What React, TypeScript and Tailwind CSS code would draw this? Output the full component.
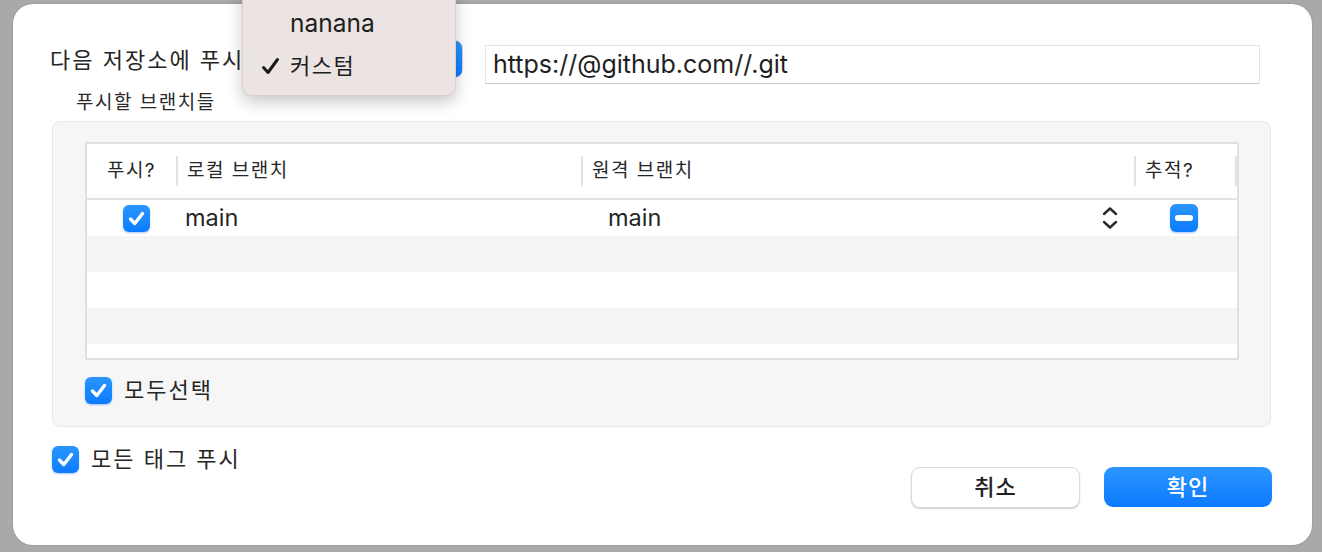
import React from 'react';

const font = "font-[Inter,'Noto_Sans_CJK_KR',sans-serif]";

const CheckBox: React.FC = () => (
  <div className="w-[27px] h-[27px] rounded-[6px] bg-gradient-to-b from-[#2a95ff] to-[#0a7bff] shadow-[0_1px_2px_rgba(0,90,255,0.35)] flex items-center justify-center shrink-0">
    <svg width="27" height="27" viewBox="0 0 27 27">
      <path d="M7.5 14 L11.8 18.5 L19.5 8.5" fill="none" stroke="white" strokeWidth="3.4" strokeLinecap="round" strokeLinejoin="round" />
    </svg>
  </div>
);

const MinusBox: React.FC = () => (
  <div className="w-[28px] h-[28px] rounded-[6px] bg-gradient-to-b from-[#2a95ff] to-[#0a7bff] shadow-[0_1px_2px_rgba(0,90,255,0.35)] flex items-center justify-center">
    <div className="w-[18px] h-[6px] rounded-full bg-white" />
  </div>
);

const UpDown: React.FC = () => (
  <svg width="16" height="24" viewBox="0 0 16 24">
    <path d="M2 8 L8 2.5 L14 8" fill="none" stroke="#2a2a2a" strokeWidth="2.4" strokeLinecap="round" strokeLinejoin="round" />
    <path d="M2 16 L8 21.5 L14 16" fill="none" stroke="#2a2a2a" strokeWidth="2.4" strokeLinecap="round" strokeLinejoin="round" />
  </svg>
);

const HeaderCell: React.FC<{ w: string; children?: React.ReactNode; center?: boolean }> = ({ w, children, center }) => (
  <div className={`${w} h-[30px] flex items-center ${center ? 'justify-center' : 'pl-[9px]'} border-r-2 border-[#e3e3e3]`}>
    {children}
  </div>
);

export default function App() {
  const emptyRows = [1, 2, 3, 4];

  return (
    <div className={`w-[1322px] h-[552px] bg-[#aaa9aa] pl-[13px] pt-[4px] overflow-hidden text-[#262626] ${font}`}>
      <div className="relative w-[1299px] h-[541px] bg-white rounded-[20px] pl-[37px] pt-[36px] shadow-[0_0_2px_rgba(0,0,0,0.2)]">
        {/* Target row */}
        <div className="flex items-start">
          <div className="w-[208px] h-[40px] flex items-center text-[22px] tracking-[2px] whitespace-nowrap overflow-hidden">다음 저장소에 푸시:</div>
          <div className="w-[205px] h-[38px] rounded-[8px] bg-gradient-to-b from-[#2a95ff] to-[#0a7bff] border border-[#d0d8e4]" />
          <div className="ml-[22px] mt-[5px] w-[775px] h-[39px] bg-white border border-[#e4e4e4] border-b-[#c9c9c9] flex items-center pl-[7px] text-[25px] text-[#1f1f1f]">
            https://@github.com//.git
          </div>
        </div>

        <div className="mt-[8px] ml-[26px] h-[22px] flex items-center text-[19px] tracking-[1.5px] text-[#2a2a2a]">푸시할 브랜치들</div>

        {/* Branch group */}
        <div className="mt-[7px] ml-[2px] w-[1219px] h-[306px] rounded-[8px] bg-[#f6f6f6] border border-[#e8e8e8] pl-[32px] pt-[20px]">
          <div className="w-[1154px] h-[218px] bg-white border-2 border-[#e0e0e0] overflow-hidden">
            <div className="h-[56px] flex items-center border-b-2 border-[#e3e3e3] text-[19px] tracking-[1.5px]">
              <HeaderCell w="w-[91px]" center>푸시?</HeaderCell>
              <HeaderCell w="w-[405px]">로컬 브랜치</HeaderCell>
              <HeaderCell w="w-[553px]">원격 브랜치</HeaderCell>
              <HeaderCell w="w-[101px]">추적?</HeaderCell>
            </div>
            <div className="h-[36px] flex items-center text-[23.5px]">
              <div className="w-[91px] flex justify-center pl-[8px]"><CheckBox /></div>
              <div className="w-[405px] pl-[7px]">main</div>
              <div className="w-[553px] pl-[25px] pr-[18px] flex items-center justify-between">
                <span>main</span>
                <UpDown />
              </div>
              <div className="w-[101px] flex justify-center pr-[6px]"><MinusBox /></div>
            </div>
            {emptyRows.map(r => (
              <div key={r} className={`h-[36px] ${r % 2 === 1 ? 'bg-[#f4f5f4]' : 'bg-white'}`} />
            ))}
          </div>
          <div className="mt-[14px] flex items-center gap-[12px]">
            <CheckBox />
            <span className="text-[22px] tracking-[2px]">모두선택</span>
          </div>
        </div>

        {/* Bottom row */}
        <div className="mt-[16px] ml-[2px] w-[1220px] flex items-start justify-between">
          <div className="flex items-center gap-[12px]">
            <CheckBox />
            <span className="text-[22px] tracking-[2px]">모든 태그 푸시</span>
          </div>
          <div className="mt-[24px] flex gap-[24px]">
            <button className="w-[169px] h-[41px] rounded-[9px] bg-white border border-[#dadada] shadow-[0_1px_1.5px_rgba(0,0,0,0.2)] text-[22px] tracking-[1px] font-medium text-[#222]">취소</button>
            <button className="w-[168px] h-[40px] rounded-[9px] bg-gradient-to-b from-[#2b96ff] to-[#0a7aff] text-[22px] tracking-[1px] font-medium text-white">확인</button>
          </div>
        </div>

        {/* Open popup menu */}
        <div className="absolute left-[229px] top-[-20px] w-[214px] h-[112px] rounded-[10px] bg-[#ece4e3] border border-[#d6cfce] shadow-[0_6px_16px_rgba(0,0,0,0.22)] pt-[17px] text-[#1e1e1e]">
          <div className="h-[43px] flex items-center pl-[47px] text-[24.5px]">nanana</div>
          <div className="h-[43px] flex items-center">
            <div className="w-[47px] flex justify-end pr-[10px]">
              <svg width="19" height="19" viewBox="0 0 19 19">
                <path d="M2.5 10.5 L7 15.5 L16.5 2.5" fill="none" stroke="#1a1a1a" strokeWidth="3" strokeLinecap="round" strokeLinejoin="round" />
              </svg>
            </div>
            <span className="text-[22px] tracking-[1.5px]">커스텀</span>
          </div>
        </div>
      </div>
    </div>
  );
}
